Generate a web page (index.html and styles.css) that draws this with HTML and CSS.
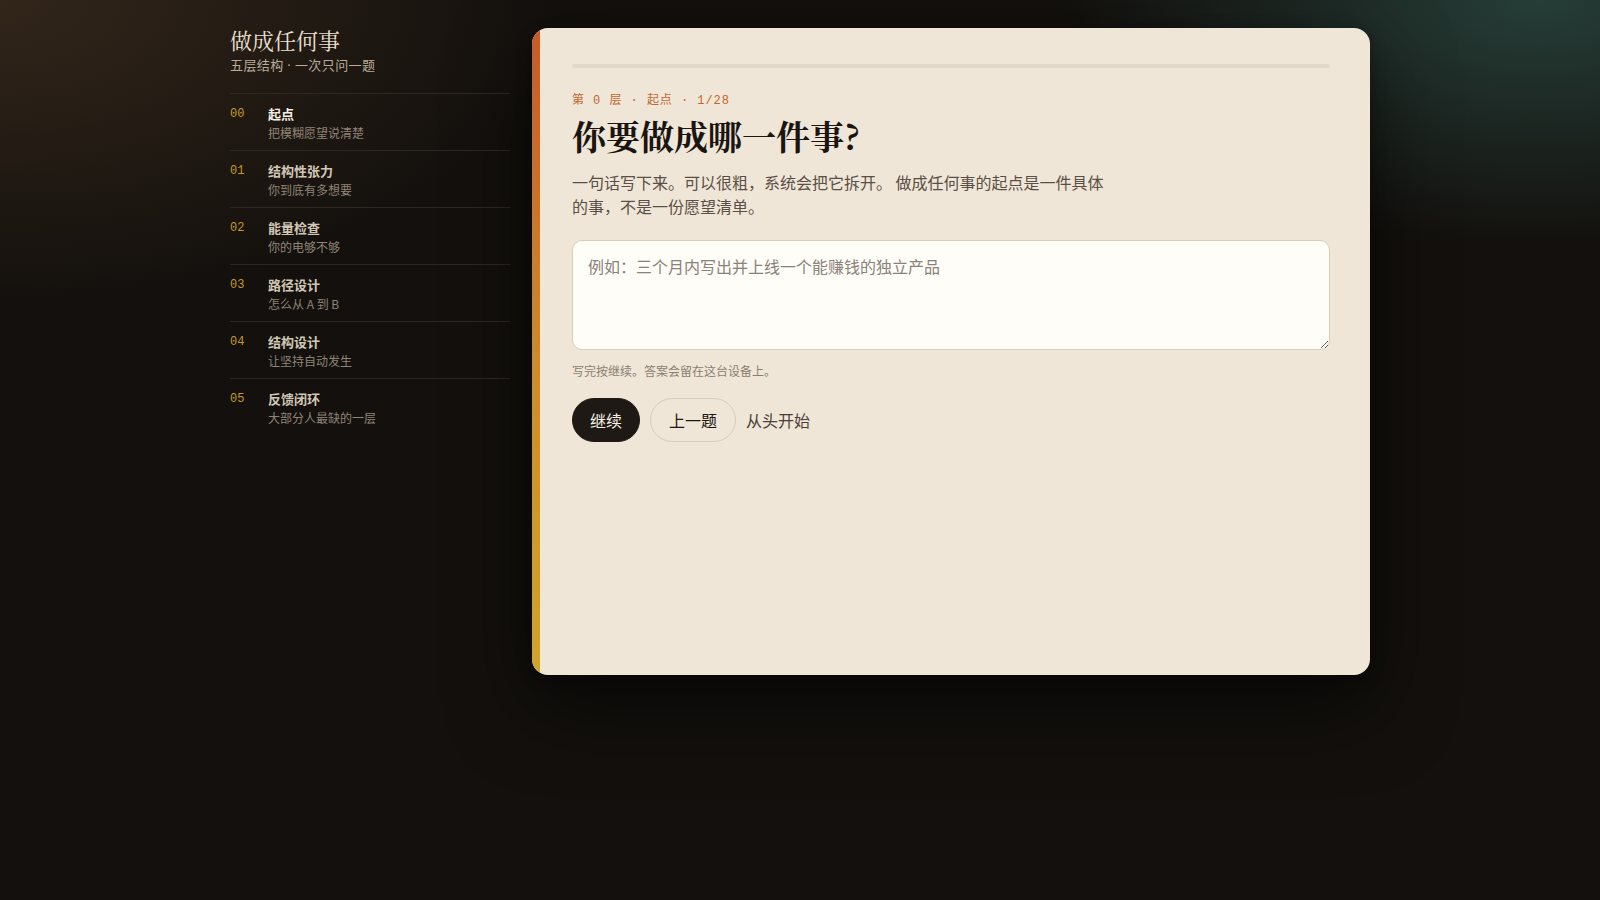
FILE: index.html
```html
<!DOCTYPE html>
<html lang="zh-CN">
<head>
<meta charset="utf-8">
<title>做成任何事</title>
<link rel="stylesheet" href="styles.css">
</head>
<body>
<div class="shell">
  <aside class="side">
    <h1 class="brand">做成任何事</h1>
    <p class="tagline">五层结构 · 一次只问一题</p>
    <ol class="layers">
      <li class="layer active"><span class="num">00</span><div><div class="lt">起点</div><div class="ls">把模糊愿望说清楚</div></div></li>
      <li class="layer"><span class="num">01</span><div><div class="lt">结构性张力</div><div class="ls">你到底有多想要</div></div></li>
      <li class="layer"><span class="num">02</span><div><div class="lt">能量检查</div><div class="ls">你的电够不够</div></div></li>
      <li class="layer"><span class="num">03</span><div><div class="lt">路径设计</div><div class="ls">怎么从 A 到 B</div></div></li>
      <li class="layer"><span class="num">04</span><div><div class="lt">结构设计</div><div class="ls">让坚持自动发生</div></div></li>
      <li class="layer"><span class="num">05</span><div><div class="lt">反馈闭环</div><div class="ls">大部分人最缺的一层</div></div></li>
    </ol>
  </aside>
  <main class="card">
    <div class="track"><div class="fill"></div></div>
    <div class="eyebrow">第 0 层 · 起点 · 1/28</div>
    <h2 class="q">你要做成哪一件事?</h2>
    <p class="lead">一句话写下来。可以很粗，系统会把它拆开。 做成任何事的起点是一件具体的事，不是一份愿望清单。</p>
    <textarea class="answer" placeholder="例如：三个月内写出并上线一个能赚钱的独立产品"></textarea>
    <p class="hint">写完按继续。答案会留在这台设备上。</p>
    <div class="actions">
      <button class="btn primary">继续</button>
      <button class="btn outline">上一题</button>
      <button class="btn ghost">从头开始</button>
    </div>
  </main>
</div>
</body>
</html>
```

FILE: styles.css
```css
* { box-sizing: border-box; }
html, body { height: 100%; }
body {
  margin: 0;
  font-family: "Noto Sans", "Noto Sans CJK SC", sans-serif;
  color: #e8dfd0;
  background:
    radial-gradient(ellipse 640px 330px at 1540px 0px, rgba(40, 66, 60, 0.9), rgba(40, 66, 60, 0) 75%),
    radial-gradient(ellipse 780px 430px at 0px 0px, rgba(52, 39, 27, 0.95), rgba(52, 39, 27, 0) 72%),
    #13100d;
  min-height: 900px;
}
.shell {
  width: 1140px;
  margin: 0 auto;
  padding-top: 26px;
  display: grid;
  grid-template-columns: 280px 1fr;
  column-gap: 22px;
  align-items: start;
}
.brand {
  margin: 0;
  font-family: "Noto Serif CJK SC", "Noto Sans CJK SC", serif;
  font-weight: 400;
  font-size: 22px;
  line-height: 28px;
  color: #ece2d2;
}
.tagline {
  margin: 2px 0 0;
  font-size: 13px;
  line-height: 18px;
  letter-spacing: 0.03em;
  color: #b9ad9a;
  padding-bottom: 19px;
  border-bottom: 1px solid #2e2823;
}
.layers { list-style: none; margin: 0; padding: 0; }
.layer {
  display: grid;
  grid-template-columns: 38px 1fr;
  padding: 11px 0 9px;
  border-bottom: 1px solid #2e2823;
}
.layer:last-child { border-bottom: 0; }
.num {
  font-family: "Liberation Mono", "DejaVu Sans Mono", monospace;
  font-size: 12px;
  line-height: 18px;
  color: #c49a2a;
}
.lt {
  font-family: "Noto Sans CJK SC", sans-serif;
  font-size: 13px;
  font-weight: 700;
  line-height: 18px;
  color: #d2c7b5;
}
.active .lt { color: #f5efe5; }
.ls {
  margin-top: 2px;
  font-family: "Noto Sans CJK SC", sans-serif;
  font-size: 12px;
  line-height: 16px;
  color: #8f8477;
}
.card {
  position: relative;
  margin-top: 2px;
  min-height: 647px;
  background: #efe6d7;
  border-radius: 16px;
  padding: 36px 40px 40px;
  overflow: hidden;
  box-shadow: 0 30px 80px rgba(0, 0, 0, 0.55), 0 4px 16px rgba(0, 0, 0, 0.3);
  color: #1c1713;
}
.card::before {
  content: "";
  position: absolute;
  left: 0; top: 0; bottom: 0;
  width: 8px;
  background: linear-gradient(180deg, #c65a2a 0%, #cc8a2c 50%, #cfa52c 100%);
}
.track {
  height: 4px;
  border-radius: 2px;
  background: #e3d9c8;
}
.fill { width: 0; height: 100%; background: #c4652f; }
.eyebrow {
  margin-top: 24px;
  font-family: "Liberation Mono", "DejaVu Sans Mono", "Noto Sans CJK SC", monospace;
  font-size: 12px;
  line-height: 18px;
  letter-spacing: 0.08em;
  color: #c4652f;
}
.q {
  margin: 4px 0 0;
  font-family: "Noto Serif CJK SC", "Noto Sans CJK SC", serif;
  font-weight: 700;
  font-size: 34px;
  line-height: 44px;
  color: #1a1511;
}
.lead {
  margin: 12px 0 0;
  max-width: 540px;
  font-family: "Noto Sans CJK SC", sans-serif;
  font-size: 16px;
  line-height: 24px;
  color: #5a4f45;
}
.answer {
  display: block;
  width: 100%;
  height: 110px;
  margin-top: 22px;
  padding: 13px 15px;
  border: 1px solid #d9cdb9;
  border-radius: 10px;
  background: #fffdf8;
  font-family: "Noto Sans CJK SC", "Noto Sans", sans-serif;
  font-size: 16px;
  line-height: 24px;
  color: #1c1713;
  resize: vertical;
  outline: none;
}
.answer::placeholder { color: #8a8178; }
.hint {
  margin: 12px 0 0;
  font-family: "Noto Sans CJK SC", sans-serif;
  font-size: 12px;
  line-height: 18px;
  color: #8a7f70;
}
.actions {
  margin-top: 18px;
  display: flex;
  align-items: center;
  gap: 10px;
}
.btn {
  height: 44px;
  border-radius: 22px;
  font-family: "Noto Sans CJK SC", "Noto Sans", sans-serif;
  font-size: 16px;
  cursor: pointer;
}
.primary {
  padding: 0 17px;
  background: #1e1915;
  border: 1px solid #1e1915;
  color: #f6efe4;
}
.outline {
  padding: 0 18px;
  background: transparent;
  border: 1px solid #d8ccb8;
  color: #1c1713;
}
.ghost {
  padding: 0;
  background: transparent;
  border: 0;
  color: #4a4038;
}
```
